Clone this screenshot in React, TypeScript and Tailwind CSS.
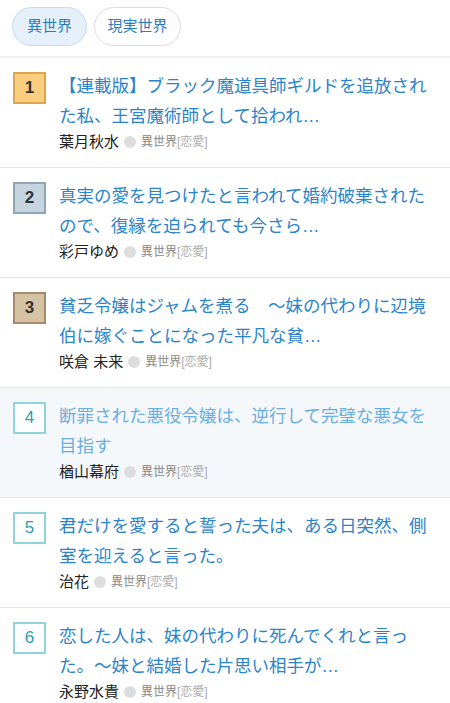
import React from 'react';

interface RankItem {
  rank: number;
  title: string;
  author: string;
  visited?: boolean;
}

const items: RankItem[] = [
  { rank: 1, title: '【連載版】ブラック魔道具師ギルドを追放された私、王宮魔術師として拾われ…', author: '葉月秋水' },
  { rank: 2, title: '真実の愛を見つけたと言われて婚約破棄されたので、復縁を迫られても今さら…', author: '彩戸ゆめ' },
  { rank: 3, title: '貧乏令嬢はジャムを煮る　～妹の代わりに辺境伯に嫁ぐことになった平凡な貧…', author: '咲倉 未来' },
  { rank: 4, title: '断罪された悪役令嬢は、逆行して完璧な悪女を目指す', author: '楢山幕府', visited: true },
  { rank: 5, title: '君だけを愛すると誓った夫は、ある日突然、側室を迎えると言った。', author: '治花' },
  { rank: 6, title: '恋した人は、妹の代わりに死んでくれと言った。～妹と結婚した片思い相手が…', author: '永野水貴' },
];

const badgeClass: Record<number, string> = {
  1: 'bg-[#f9cf7f] border-[#e0a54c] text-[#333] font-bold',
  2: 'bg-[#c6d4df] border-[#8fa6b6] text-[#333] font-bold',
  3: 'bg-[#d6c3a3] border-[#a6896a] text-[#333] font-bold',
};

const font = 'font-["Liberation_Sans","Noto_Sans_CJK_JP",sans-serif]';

const App: React.FC = () => {
  return (
    <div lang="ja" className={`w-[450px] min-h-[703px] bg-white ${font}`}>
      <div className="h-[58px] flex gap-[7px] pl-[12px] pt-[7px] border-b-2 border-[#efefef]">
        <div className="w-[75px] h-[39px] rounded-full bg-[#e6f0fb] border border-[#c7daee] flex items-center justify-center text-[15px] text-[#2a7cc0]">
          異世界
        </div>
        <div className="w-[87px] h-[39px] rounded-full bg-white border border-[#dcdcdc] flex items-center justify-center text-[15px] text-[#2a7cc0]">
          現実世界
        </div>
      </div>

      {items.map(item => (
        <div
          key={item.rank}
          className={`flex pl-[13px] pr-[12px] pt-[13px] pb-[14px] border-b border-[#e6e6e6] ${item.visited ? 'bg-[#f5f8fb]' : 'bg-white'}`}
        >
          <div
            className={`mt-px w-[33px] h-[32px] shrink-0 border-2 flex items-center justify-center text-[17px] ${
              badgeClass[item.rank] ?? 'bg-white border-[#8fd4dc] text-[#2aa0ae]'
            }`}
          >
            {item.rank}
          </div>
          <div className="ml-[13px] flex-1 min-w-0">
            <div className={`text-[17.5px] leading-[30px] ${item.visited ? 'text-[#6aaee2]' : 'text-[#2b84cb]'}`}>
              {item.title}
            </div>
            <div className="flex items-center h-[22px]">
              <span className="text-[15px] text-[#222]">{item.author}</span>
              <span className="ml-[5px] w-[12px] h-[12px] rounded-full bg-[#dddddd]" />
              <span className="ml-[5px] text-[12px] text-[#888]">
                異世界<span className="text-[#aaa]">[恋愛]</span>
              </span>
            </div>
          </div>
        </div>
      ))}
    </div>
  );
};

export default App;
